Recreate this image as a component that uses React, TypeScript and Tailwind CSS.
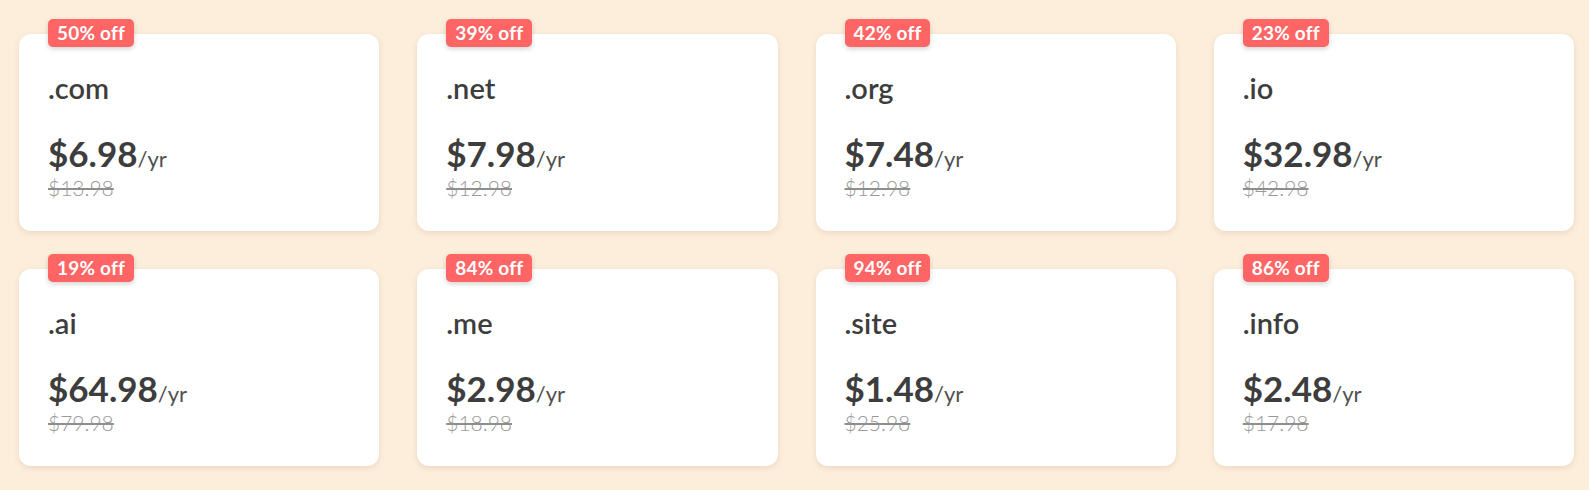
const domains = [
	{ tld: ".com", price: "$6.98", was: "$13.98", off: 50 },
	{ tld: ".net", price: "$7.98", was: "$12.98", off: 39 },
	{ tld: ".org", price: "$7.48", was: "$12.98", off: 42 },
	{ tld: ".io", price: "$32.98", was: "$42.98", off: 23 },
	{ tld: ".ai", price: "$64.98", was: "$79.98", off: 19 },
	{ tld: ".me", price: "$2.98", was: "$18.98", off: 84 },
	{ tld: ".site", price: "$1.48", was: "$25.98", off: 94 },
	{ tld: ".info", price: "$2.48", was: "$17.98", off: 86 },
]

const DomainCard = ({ tld, price, was, off }: (typeof domains)[number]) => (
	<div className="relative h-[197px] rounded-xl bg-white px-[29px] pt-[37px] shadow-[0_2px_6px_rgba(120,80,40,0.14)]">
		<span className="absolute -top-[15px] left-[29px] h-[28px] rounded-[5px] bg-[#ff6565] px-[9px] text-[19px] leading-[28px] font-bold tracking-[0.2px] text-white shadow-[0_2px_5px_rgba(0,0,0,0.18)]">
			{off}% off
		</span>
		<div className="text-[29px] leading-[1.2] font-semibold text-[#3d3d3d]">{tld}</div>
		<div className="mt-[26px] leading-[1.2] text-[#3d3d3d]">
			<span className="text-[35px] font-bold">{price}</span>
			<span className="text-[22px] font-normal text-[#505050]">/yr</span>
		</div>
		<div className="mt-[1px] text-[21px] leading-[1.2] font-light text-[#9a9a9a] line-through decoration-[#8e8e8e] decoration-2">
			{was}
		</div>
	</div>
)

export default function App() {
	return (
		<div
			className="min-h-screen bg-[#fdeedc] pt-[34px] pr-[15px] pb-6 pl-[19px]"
			style={{ fontFamily: "Lato, 'Noto Sans', sans-serif" }}
		>
			<div className="grid grid-cols-4 gap-[38px]">
				{domains.map((d) => (
					<DomainCard key={d.tld} {...d} />
				))}
			</div>
		</div>
	)
}
